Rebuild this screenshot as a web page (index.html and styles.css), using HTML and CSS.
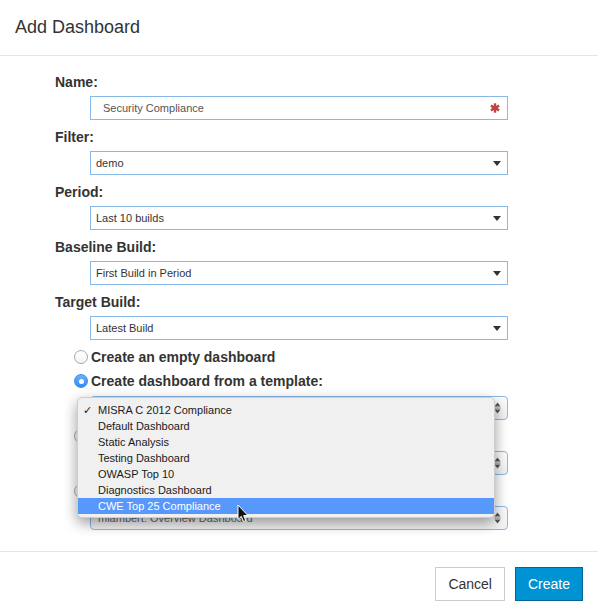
FILE: index.html
```html
<!DOCTYPE html>
<html>
<head>
<meta charset="utf-8">
<title>Add Dashboard</title>
<link rel="stylesheet" href="styles.css">
</head>
<body>
<div class="modal">
  <div class="modal-header">
    <h4 class="title">Add Dashboard</h4>
  </div>
  <div class="modal-body">
    <div class="field">
      <div class="label">Name:</div>
      <div class="control input">
        <span class="value name-value">Security Compliance</span>
        <svg class="req" width="10" height="10" viewBox="0 0 10 10">
          <g stroke="#bf4540" stroke-width="2.4" stroke-linecap="butt">
            <line x1="5" y1="0.3" x2="5" y2="9.7"/>
            <line x1="0.9" y1="2.6" x2="9.1" y2="7.4"/>
            <line x1="0.9" y1="7.4" x2="9.1" y2="2.6"/>
          </g>
        </svg>
      </div>
    </div>
    <div class="field">
      <div class="label">Filter:</div>
      <div class="control select"><span class="value">demo</span><span class="caret"></span></div>
    </div>
    <div class="field">
      <div class="label">Period:</div>
      <div class="control select"><span class="value">Last 10 builds</span><span class="caret"></span></div>
    </div>
    <div class="field">
      <div class="label">Baseline Build:</div>
      <div class="control select"><span class="value">First Build in Period</span><span class="caret"></span></div>
    </div>
    <div class="field">
      <div class="label">Target Build:</div>
      <div class="control select"><span class="value">Latest Build</span><span class="caret"></span></div>
    </div>

    <div class="radio first"><span class="dot"></span><span class="radio-text">Create an empty dashboard</span></div>
    <div class="radio"><span class="dot on"></span><span class="radio-text">Create dashboard from a template:</span></div>
    <div class="template-wrap">
      <div class="control select mac"><span class="value covered">MISRA C 2012 Compliance</span>
        <svg class="updown" width="7" height="12" viewBox="0 0 7 12"><path d="M3.5 0.5 L6.5 4.5 L0.5 4.5 Z M3.5 11.5 L6.5 7.5 L0.5 7.5 Z" fill="#555"/><rect x="0.5" y="5.6" width="6" height="0.9" fill="#777"/></svg>
      </div>
      <div class="menu">
        <div class="item"><span class="check">✓</span>MISRA C 2012 Compliance</div>
        <div class="item">Default Dashboard</div>
        <div class="item">Static Analysis</div>
        <div class="item">Testing Dashboard</div>
        <div class="item">OWASP Top 10</div>
        <div class="item">Diagnostics Dashboard</div>
        <div class="item active">CWE Top 25 Compliance</div>
        <svg class="cursor" width="12" height="19" viewBox="0 0 12 19">
          <path d="M1 1 L1 15.5 L4.3 12.4 L6.6 17.6 L8.8 16.6 L6.6 11.6 L11 11.6 Z" fill="#111" stroke="#fff" stroke-width="1" stroke-linejoin="round"/>
        </svg>
      </div>
    </div>
    <div class="radio"><span class="dot"></span><span class="radio-text covered">Create dashboard from a shared template:</span></div>
    <div class="control select mac"><span class="value covered">Select a template</span>
      <svg class="updown" width="7" height="12" viewBox="0 0 7 12"><path d="M3.5 0.5 L6.5 4.5 L0.5 4.5 Z M3.5 11.5 L6.5 7.5 L0.5 7.5 Z" fill="#555"/><rect x="0.5" y="5.6" width="6" height="0.9" fill="#777"/></svg>
    </div>
    <div class="radio"><span class="dot"></span><span class="radio-text covered">Copy an existing dashboard:</span></div>
    <div class="control select mac last"><span class="value muted">mlambert: Overview Dashboard</span>
      <svg class="updown" width="7" height="12" viewBox="0 0 7 12"><path d="M3.5 0.5 L6.5 4.5 L0.5 4.5 Z M3.5 11.5 L6.5 7.5 L0.5 7.5 Z" fill="#555"/><rect x="0.5" y="5.6" width="6" height="0.9" fill="#777"/></svg>
    </div>
  </div>
  <div class="modal-footer">
    <button class="btn">Cancel</button>
    <button class="btn primary">Create</button>
  </div>
</div>
</body>
</html>
```

FILE: styles.css
```css
* { box-sizing: border-box; }
html, body { margin: 0; padding: 0; background: #fff; }
body {
  font-family: "Liberation Sans", Arial, Helvetica, sans-serif;
  color: #333;
  width: 598px;
  height: 616px;
  overflow: hidden;
}
.modal { width: 598px; height: 616px; display: flex; flex-direction: column; }
.modal-header {
  height: 56px;
  padding: 15px;
  border-bottom: 1px solid #e5e5e5;
}
.title {
  margin: 0;
  font-size: 18px;
  font-weight: normal;
  line-height: 25px;
  color: #333;
}
.modal-body {
  padding: 16px 90px 21px 55px;
  display: flex;
  flex-direction: column;
}
.field { display: flex; flex-direction: column; }
.label {
  font-size: 14px;
  font-weight: bold;
  line-height: 20px;
  margin-bottom: 4px;
  color: #333;
}
.control {
  margin-left: 35px;
  height: 24px;
  border: 1px solid #88b9e7;
  background: #fff;
  display: flex;
  align-items: center;
  font-size: 11px;
  color: #333;
  margin-bottom: 7px;
}
.control .value { padding-left: 5px; flex: 1; white-space: nowrap; overflow: hidden; }
.control .name-value { padding-left: 12px; color: #555; }
.req { margin-right: 7px; flex: none; }
.caret {
  width: 0; height: 0;
  border-left: 4px solid transparent;
  border-right: 4px solid transparent;
  border-top: 5px solid #333;
  margin-right: 6px;
  margin-top: 1px;
}
.control.mac {
  border-radius: 4px;
  background: linear-gradient(#fdfdfd, #f1f1f1);
  margin-bottom: 6px;
}
.control.mac .value { padding-left: 7px; }
.control.mac.last { margin-bottom: 0; }
.updown { margin-right: 6px; flex: none; }
.muted { color: #666; }
.covered { visibility: hidden; }

.radio {
  display: flex;
  align-items: center;
  height: 20px;
  margin-left: 19px;
  margin-bottom: 5px;
  font-size: 14px;
  font-weight: bold;
  color: #333;
}
.radio.first { margin-bottom: 4px; }
.dot {
  width: 14px; height: 14px;
  border-radius: 50%;
  border: 1px solid #a9a9a9;
  background: linear-gradient(#fff, #f3f3f3);
  margin-right: 3px;
  flex: none;
  display: flex;
  align-items: center;
  justify-content: center;
}
.dot.on {
  border-color: #3b8de8;
  background: linear-gradient(#6bb1fb, #2f8bf3);
}
.dot.on::after {
  content: "";
  width: 5px; height: 5px;
  border-radius: 50%;
  background: #fff;
}

.template-wrap { position: relative; }
.template-wrap .control { margin-bottom: 6px; }
.menu {
  position: absolute;
  left: 22px;
  top: 1px;
  width: 418px;
  padding: 4px 0 3px;
  background: #f0f0f0;
  border-radius: 5px;
  border: 1px solid #cdcdcd;
  box-shadow: 0 5px 14px rgba(0,0,0,0.4);
  z-index: 5;
}
.item {
  position: relative;
  height: 16px;
  line-height: 16px;
  padding-left: 20px;
  font-size: 11px;
  color: #1a1a1a;
  white-space: nowrap;
}
.item.active { background: #5898fc; color: #fff; }
.check { position: absolute; left: 5px; top: 0; font-size: 11px; }
.cursor { position: absolute; left: 159px; top: 106px; }

.modal-footer {
  margin-top: auto;
  border-top: 1px solid #e5e5e5;
  padding: 15px;
  display: flex;
  justify-content: flex-end;
  gap: 10px;
}
.btn {
  height: 34px;
  padding: 0 12px;
  font-family: "Liberation Sans", Arial, Helvetica, sans-serif;
  font-size: 14px;
  border: 1px solid #ccc;
  background: #fff;
  color: #333;
  border-radius: 0;
}
.btn.primary {
  background: #0093d3;
  border-color: #00649a;
  color: #fff;
}
```
